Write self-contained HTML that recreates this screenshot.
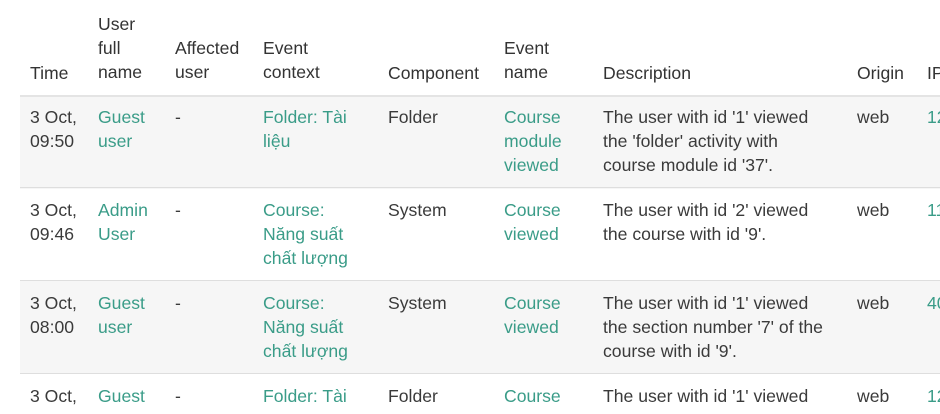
<!DOCTYPE html>
<html><head><meta charset="utf-8"><style>
body{margin:0;width:940px;height:400px;overflow:hidden;background:#fff;font-family:"Liberation Sans","DejaVu Sans",sans-serif;font-size:17.6px;color:#3a3a3a;position:relative}
.r{position:absolute;left:20px;width:920px;border-top:1px solid #dedede}
.g{background:#f6f6f6}
.c{position:absolute;line-height:24px;white-space:nowrap}
.h{font-weight:normal;color:#333}
.a{color:#3a9c88}
</style></head><body>
<div class="r g" style="top:95px;height:92px;border-top:2px solid #e4e4e4"></div>
<div class="r" style="top:187px;height:92px;"></div>
<div class="r g" style="top:280px;height:92px;"></div>
<div class="r" style="top:373px;height:40px;"></div>

<div class="c h" style="left:30px;top:61px">Time</div>
<div class="c h" style="left:98px;top:12px">User<br>full<br>name</div>
<div class="c h" style="left:175px;top:36px">Affected<br>user</div>
<div class="c h" style="left:263px;top:36px">Event<br>context</div>
<div class="c h" style="left:388px;top:61px">Component</div>
<div class="c h" style="left:504px;top:36px">Event<br>name</div>
<div class="c h" style="left:603px;top:61px">Description</div>
<div class="c h" style="left:857px;top:61px">Origin</div>
<div class="c h" style="left:927px;top:61px">IP</div>

<div class="c" style="left:30px;top:105px">3 Oct,<br>09:50</div>
<div class="c a" style="left:98px;top:105px">Guest<br>user</div>
<div class="c" style="left:175px;top:105px">-</div>
<div class="c a" style="left:263px;top:105px">Folder: Tài<br>liệu</div>
<div class="c" style="left:388px;top:105px">Folder</div>
<div class="c a" style="left:504px;top:105px">Course<br>module<br>viewed</div>
<div class="c" style="left:603px;top:105px">The user with id '1' viewed<br>the 'folder' activity with<br>course module id '37'.</div>
<div class="c" style="left:857px;top:105px">web</div>
<div class="c a" style="left:927px;top:105px">12</div>

<div class="c" style="left:30px;top:198px">3 Oct,<br>09:46</div>
<div class="c a" style="left:98px;top:198px">Admin<br>User</div>
<div class="c" style="left:175px;top:198px">-</div>
<div class="c a" style="left:263px;top:198px">Course:<br>Năng suất<br>chất lượng</div>
<div class="c" style="left:388px;top:198px">System</div>
<div class="c a" style="left:504px;top:198px">Course<br>viewed</div>
<div class="c" style="left:603px;top:198px">The user with id '2' viewed<br>the course with id '9'.</div>
<div class="c" style="left:857px;top:198px">web</div>
<div class="c a" style="left:927px;top:198px">11</div>

<div class="c" style="left:30px;top:291px">3 Oct,<br>08:00</div>
<div class="c a" style="left:98px;top:291px">Guest<br>user</div>
<div class="c" style="left:175px;top:291px">-</div>
<div class="c a" style="left:263px;top:291px">Course:<br>Năng suất<br>chất lượng</div>
<div class="c" style="left:388px;top:291px">System</div>
<div class="c a" style="left:504px;top:291px">Course<br>viewed</div>
<div class="c" style="left:603px;top:291px">The user with id '1' viewed<br>the section number '7' of the<br>course with id '9'.</div>
<div class="c" style="left:857px;top:291px">web</div>
<div class="c a" style="left:927px;top:291px">40</div>

<div class="c" style="left:30px;top:384px">3 Oct,</div>
<div class="c a" style="left:98px;top:384px">Guest</div>
<div class="c" style="left:175px;top:384px">-</div>
<div class="c a" style="left:263px;top:384px">Folder: Tài</div>
<div class="c" style="left:388px;top:384px">Folder</div>
<div class="c a" style="left:504px;top:384px">Course</div>
<div class="c" style="left:603px;top:384px">The user with id '1' viewed</div>
<div class="c" style="left:857px;top:384px">web</div>
<div class="c a" style="left:927px;top:384px">12</div>
</body></html>
